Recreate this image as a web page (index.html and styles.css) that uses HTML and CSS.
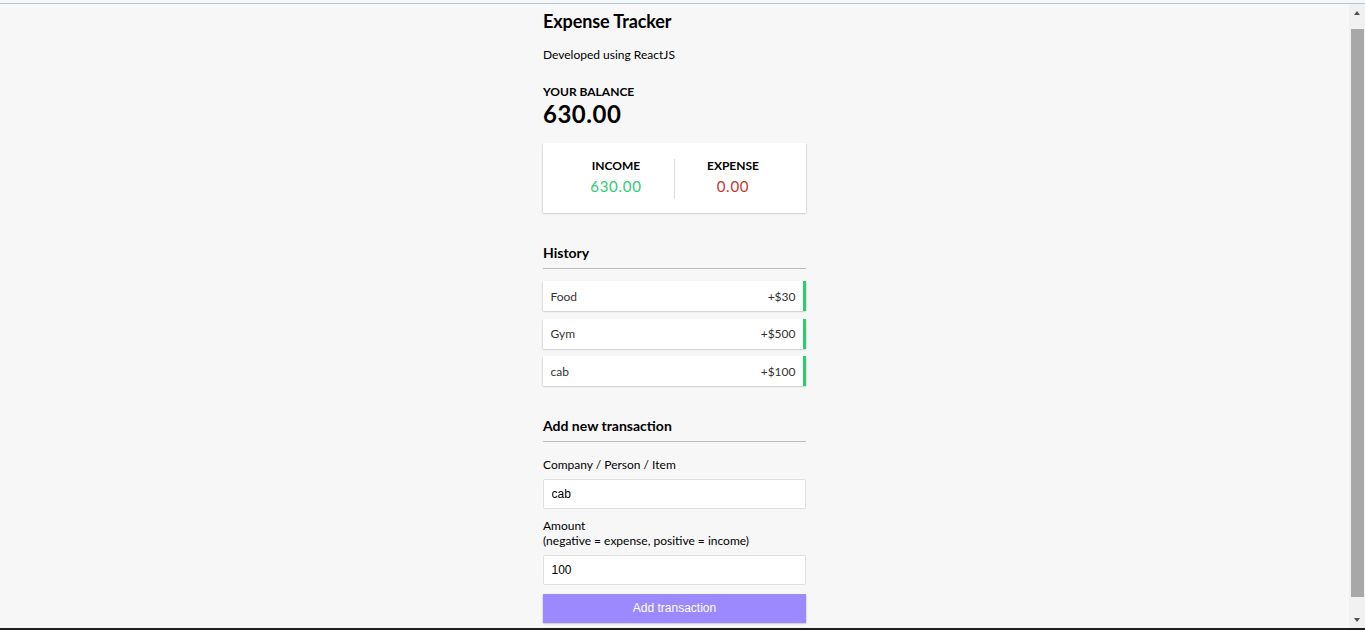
FILE: index.html
```html
<!DOCTYPE html>
<html lang="en">
<head>
<meta charset="utf-8">
<title>Expense Tracker</title>
<link rel="stylesheet" href="styles.css">
</head>
<body>
<div class="frame-top"></div>
<main class="container">
  <h2 class="title">Expense Tracker</h2>
  <p class="subtitle">Developed using ReactJS</p>

  <h4 class="caps">Your Balance</h4>
  <h1 class="balance">630.00</h1>

  <div class="inc-exp">
    <div class="inc-exp-col">
      <h4 class="caps">Income</h4>
      <p class="money plus">630.00</p>
    </div>
    <div class="inc-exp-col">
      <h4 class="caps">Expense</h4>
      <p class="money minus">0.00</p>
    </div>
  </div>

  <h3 class="section">History</h3>
  <ul class="list">
    <li class="plus"><span>Food</span><span>+$30</span></li>
    <li class="plus"><span>Gym</span><span>+$500</span></li>
    <li class="plus"><span>cab</span><span>+$100</span></li>
  </ul>

  <h3 class="section section-add">Add new transaction</h3>
  <form class="form">
    <div class="form-control">
      <label class="field-label" for="text">Company / Person / Item</label>
      <input class="field" type="text" id="text" value="cab">
    </div>
    <div class="form-control">
      <label class="field-label field-label-amount" for="amount">Amount<br>(negative = expense, positive = income)</label>
      <input class="field" type="text" id="amount" value="100">
    </div>
    <button class="btn" type="button">Add transaction</button>
  </form>
</main>

<div class="scrollbar">
  <div class="sb-arrow sb-up"></div>
  <div class="sb-thumb"></div>
  <div class="sb-arrow sb-down"></div>
</div>
<div class="frame-bottom"></div>
</body>
</html>
```

FILE: styles.css
```css
* {
  box-sizing: border-box;
}

html, body {
  margin: 0;
  background: #f7f7f7;
}

body {
  font-family: Lato, "Noto Sans", sans-serif;
  color: #000;
  padding-right: 16px;
  min-height: 630px;
}

.container {
  width: 263px;
  margin: 0 auto;
  padding-top: 11px;
  padding-bottom: 30px;
}

.title {
  font-size: 18px;
  font-weight: 700;
  margin: 0 0 15px;
  line-height: 21.6px;
  letter-spacing: -0.1px;
}

.subtitle {
  font-size: 12px;
  line-height: 14.4px;
  margin: 0 0 23px;
}

.caps {
  font-size: 12px;
  line-height: 14.4px;
  font-weight: 700;
  text-transform: uppercase;
  margin: 0;
}

.balance {
  font-size: 24px;
  line-height: 28.8px;
  font-weight: 700;
  letter-spacing: 0.5px;
  margin: 1px 0 14px;
}

.inc-exp {
  background: #fff;
  box-shadow: 0 0.75px 2.25px rgba(0, 0, 0, 0.12), 0 0.75px 1.5px rgba(0, 0, 0, 0.24);
  padding: 15.5px 15px 14.5px;
  display: flex;
  justify-content: space-between;
  margin: 0 0 31px;
}

.inc-exp-col {
  flex: 1;
  text-align: center;
}

.inc-exp-col:first-child {
  border-right: 1px solid #dedede;
}

.money {
  font-size: 15px;
  line-height: 18px;
  letter-spacing: 0.75px;
  margin: 3.75px 0;
}

.money.plus {
  color: #2ecc71;
}

.money.minus {
  color: #c0392b;
}

.section {
  font-size: 14px;
  line-height: 17px;
  font-weight: 700;
  margin: 0 0 12px;
  padding-bottom: 7px;
  border-bottom: 1px solid #bbb;
}

.section-add {
  margin-top: -0.5px;
  padding-bottom: 7.5px;
  margin-bottom: 7.5px;
}

.list {
  list-style: none;
  padding: 0;
  margin: 0 0 31px;
  display: flex;
  flex-direction: column;
  gap: 7.5px;
}

.list li {
  background: #fff;
  box-shadow: 0 0.75px 2.25px rgba(0, 0, 0, 0.12), 0 0.75px 1.5px rgba(0, 0, 0, 0.24);
  color: #333;
  display: flex;
  justify-content: space-between;
  font-size: 12px;
  line-height: 14px;
  padding: 8.5px 7.5px 7.5px;
  height: 30px;
}

.list li.plus {
  border-right: 3.75px solid #2ecc71;
}

.form-control {
  display: flex;
  flex-direction: column;
}

.field-label {
  display: block;
  font-size: 12px;
  line-height: 15px;
  margin: 7.5px 0 6.5px;
}

.field-label-amount {
  margin: 9px 0 6px;
  line-height: 15.3px;
}

.field {
  display: block;
  width: 100%;
  height: 30.5px;
  border: 1px solid #dedede;
  border-radius: 1.5px;
  background: #fff;
  padding: 0 7.5px;
  font-family: "Liberation Sans", Arial, sans-serif;
  font-size: 12px;
  color: #000;
  outline: none;
}

.btn {
  display: block;
  width: 100%;
  height: 29px;
  margin: 8.5px 0 0;
  border: 0;
  background: #9c88ff;
  color: #fff;
  font-family: "Liberation Sans", Arial, sans-serif;
  font-size: 12px;
  box-shadow: 0 0.75px 2.25px rgba(0, 0, 0, 0.12), 0 0.75px 1.5px rgba(0, 0, 0, 0.24);
  cursor: pointer;
}

/* screenshot frame decorations */
.frame-top {
  position: fixed;
  left: 0;
  right: 0;
  top: 3px;
  height: 1px;
  background: #a9cbcf;
  z-index: 3;
}

.frame-bottom {
  position: fixed;
  left: 0;
  right: 0;
  bottom: 0;
  height: 2px;
  background: #1e1e1e;
  z-index: 3;
}

.scrollbar {
  position: fixed;
  right: 0;
  top: 4px;
  bottom: 2px;
  width: 16px;
  background: #f1f1f1;
  z-index: 2;
}

.sb-thumb {
  position: absolute;
  left: 2px;
  right: 1px;
  top: 25px;
  height: 568px;
  background: #a8a8a8;
}

.sb-arrow {
  position: absolute;
  left: 5px;
  width: 0;
  height: 0;
  border-left: 3.5px solid transparent;
  border-right: 3.5px solid transparent;
}

.sb-up {
  top: 7px;
  border-bottom: 4px solid #505050;
}

.sb-down {
  bottom: 6px;
  border-top: 4px solid #505050;
}
```
